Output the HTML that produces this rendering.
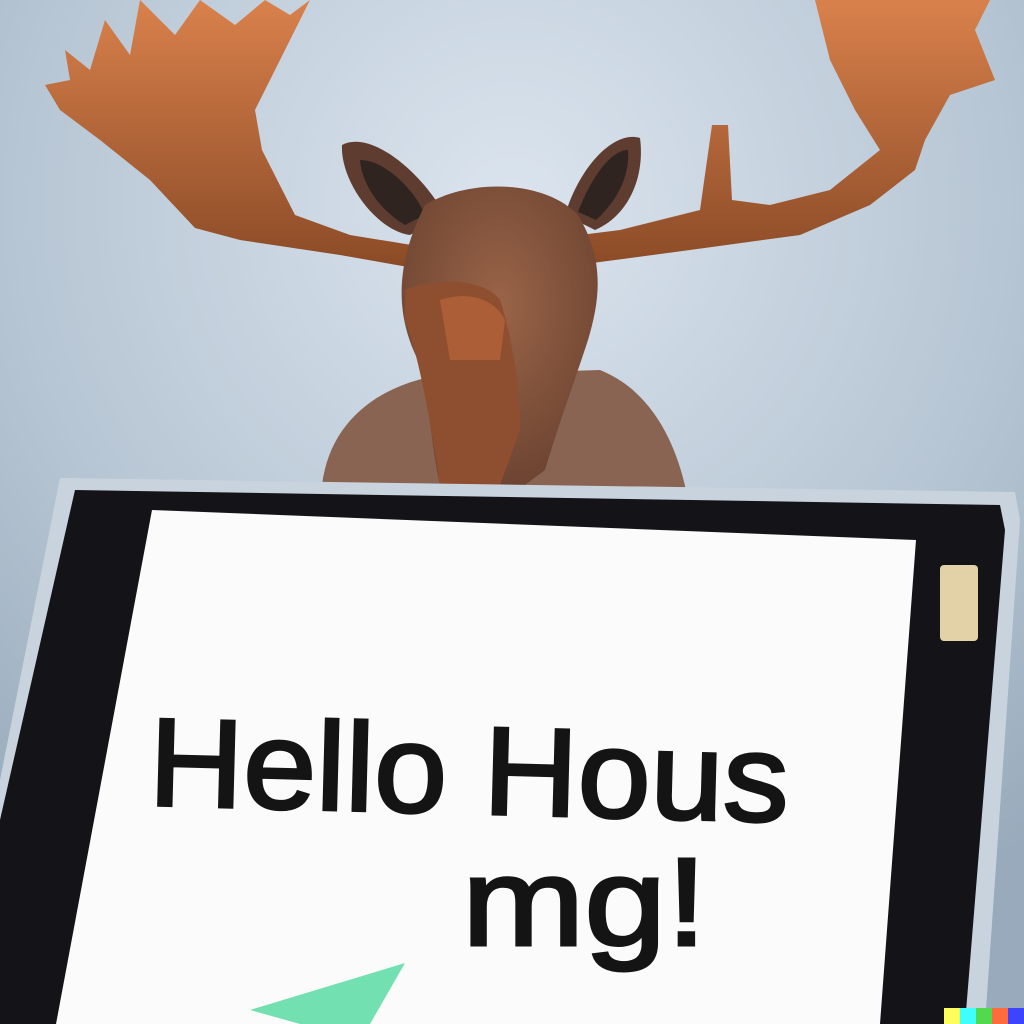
<!DOCTYPE html>
<html><head><style>
html,body{margin:0;padding:0;width:1024px;height:1024px;overflow:hidden}
</style></head><body>
<svg width="1024" height="1024" viewBox="0 0 1024 1024" xmlns="http://www.w3.org/2000/svg">
<defs>
<radialGradient id="bg" cx="0.5" cy="0.2" r="0.8">
<stop offset="0" stop-color="#dbe4ee"/><stop offset="0.6" stop-color="#b7c6d4"/><stop offset="1" stop-color="#98aabb"/>
</radialGradient>
<linearGradient id="ant" x1="0" y1="0" x2="0" y2="1">
<stop offset="0" stop-color="#d9814c"/><stop offset="1" stop-color="#8a4a26"/>
</linearGradient>
<radialGradient id="head" cx="0.5" cy="0.4" r="0.6">
<stop offset="0" stop-color="#9a6448"/><stop offset="1" stop-color="#6e4532"/>
</radialGradient>
</defs>
<rect width="1024" height="1024" fill="url(#bg)"/>
<path d="M322 485 C330 420 380 385 440 375 L600 370 C650 390 675 440 686 490 Z" fill="#8a6452"/>
<path d="M45 85 L70 80 L65 50 L90 70 L105 20 L130 55 L140 0 L175 35 L200 0 L235 25 L265 0 L290 15 L310 0 L280 60 L255 110 L262 150 L295 215 L350 235 L430 248 L425 270 L340 255 L240 240 L195 228 L150 180 L100 140 L60 110 Z" fill="url(#ant)"/>
<path d="M540 240 L620 230 L700 210 L712 125 L728 125 L732 200 L770 205 L830 190 L880 150 L855 110 L830 60 L815 0 L990 0 L975 30 L995 80 L950 95 L925 140 L915 170 L870 205 L800 235 L690 250 L600 262 L545 270 Z" fill="url(#ant)"/>
<path d="M342 145 C370 130 420 170 445 215 L410 235 C375 230 340 180 342 145 Z" fill="#5e3d30"/>
<path d="M640 138 C615 130 580 165 565 215 L595 230 C630 215 645 175 640 138 Z" fill="#5e3d30"/>
<path d="M360 160 C385 160 415 190 425 215 L405 225 C380 210 362 185 360 160Z" fill="#2f2420"/>
<path d="M628 150 C610 150 590 180 578 212 L596 220 C618 200 630 175 628 150Z" fill="#2f2420"/>
<path d="M425 205 C470 178 545 180 578 215 C605 260 600 300 588 340 C575 380 560 420 545 470 L525 485 L440 485 C430 440 430 400 418 360 C398 320 392 270 425 205 Z" fill="url(#head)"/>
<path d="M405 290 C430 280 480 275 500 300 C510 330 520 380 520 430 L500 485 L440 485 C430 420 420 360 405 320 Z" fill="#8e4f30"/>
<path d="M440 300 C470 290 495 300 505 320 L500 360 L450 360 Z" fill="#c06a3a" opacity="0.6"/>
<path d="M60 478 L1015 492 L1020 520 L985 1024 L0 1024 L0 780 Z" fill="#c9d3dd"/>
<path d="M75 490 L1000 505 L1005 530 L965 1024 L0 1024 L0 820 Z" fill="#141318"/>
<path d="M152 510 L916 540 L880 1024 L56 1024 Z" fill="#fbfbfb"/>
<rect x="940" y="565" width="38" height="76" rx="4" fill="#e3d1a8"/>
<path d="M250 1010 L405 963 L370 1024 L300 1024 Z" fill="#72e0b0"/>
<g font-family="Liberation Sans, sans-serif" fill="#141414" stroke="#141414" stroke-width="3">
<text x="148" y="805" font-size="125" transform="rotate(1.5 148 805)" textLength="640" lengthAdjust="spacingAndGlyphs">Hello Hous</text>
<text x="462" y="945" font-size="125" textLength="245" lengthAdjust="spacingAndGlyphs">mg!</text>
</g>
<rect x="944" y="1008" width="16" height="16" fill="#fefe5a"/>
<rect x="960" y="1008" width="16" height="16" fill="#3ffffe"/>
<rect x="976" y="1008" width="16" height="16" fill="#53d94e"/>
<rect x="992" y="1008" width="16" height="16" fill="#fe6b3c"/>
<rect x="1008" y="1008" width="16" height="16" fill="#3c44fe"/>
</svg>
</body></html>
